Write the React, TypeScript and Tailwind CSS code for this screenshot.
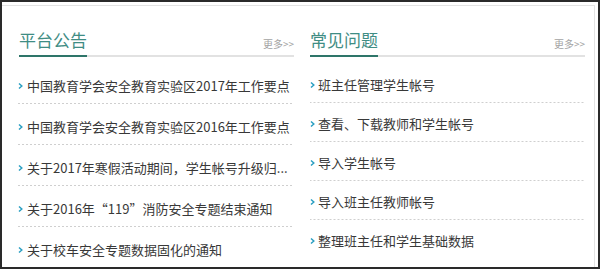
import React from "react";

const FONT = { fontFamily: '"Noto Sans CJK SC", "Noto Sans", sans-serif' };

function Bullet() {
  return (
    <svg width="5" height="8" viewBox="0 0 5 8" className="shrink-0">
      <polyline points="1,1.5 3.8,4 1,6.5" fill="none" stroke="#2a9fc2" strokeWidth="1.5" />
    </svg>
  );
}

function Panel({
  title,
  items,
  rowClass,
  listClass,
  gapClass,
}: {
  title: string;
  items: string[];
  rowClass: string;
  listClass: string;
  gapClass: string;
}) {
  return (
    <div className="flex flex-col pt-[22px]">
      <div className="flex justify-between items-end border-b-2 border-[#e2e2e2]">
        <span className="block text-[17px] leading-[24px] text-[#3f8d84] border-b-2 border-[#2e7569] pb-[3px] -mb-[2px]">
          {title}
        </span>
        <span className="text-[10px] leading-[14px] text-[#a3a3a3] mb-[4px]">更多&gt;&gt;</span>
      </div>
      <div className={listClass}>
        {items.map((t, i) => (
          <div
            key={i}
            className={
              rowClass +
              " flex items-center " +
              gapClass +
              (i < items.length - 1
                ? " bg-[linear-gradient(to_right,#cfcfcf_2px,transparent_2px)] bg-[length:4px_1px] bg-bottom bg-repeat-x"
                : "")
            }
          >
            <Bullet />
            <span className="text-[13px] leading-[18px] text-[#383838] whitespace-nowrap">{t}</span>
          </div>
        ))}
      </div>
    </div>
  );
}

export default function App() {
  return (
    <div style={FONT} className="w-[600px] h-[269px] border-2 border-[#2a2a2a] bg-white pt-[3px] pr-[3px] overflow-hidden">
      <div className="h-full border-t border-r border-[#e3e3e3] pl-[17px] grid grid-cols-[275px_275px] gap-x-[16px] overflow-hidden">
        <Panel
          title="平台公告"
          listClass="mt-[6px]"
          rowClass="h-[41px] pt-[5px] pb-[1px]"
          gapClass="gap-[4px] -ml-[1px]"
          items={[
            "中国教育学会安全教育实验区2017年工作要点",
            "中国教育学会安全教育实验区2016年工作要点",
            "关于2017年寒假活动期间，学生帐号升级归...",
            "关于2016年“119”消防安全专题结束通知",
            "关于校车安全专题数据固化的通知",
          ]}
        />
        <Panel
          title="常见问题"
          listClass="mt-[7px]"
          rowClass="h-[39px] pt-[4px] pb-[1px]"
          gapClass="gap-[3px]"
          items={[
            "班主任管理学生帐号",
            "查看、下载教师和学生帐号",
            "导入学生帐号",
            "导入班主任教师帐号",
            "整理班主任和学生基础数据",
          ]}
        />
      </div>
    </div>
  );
}
